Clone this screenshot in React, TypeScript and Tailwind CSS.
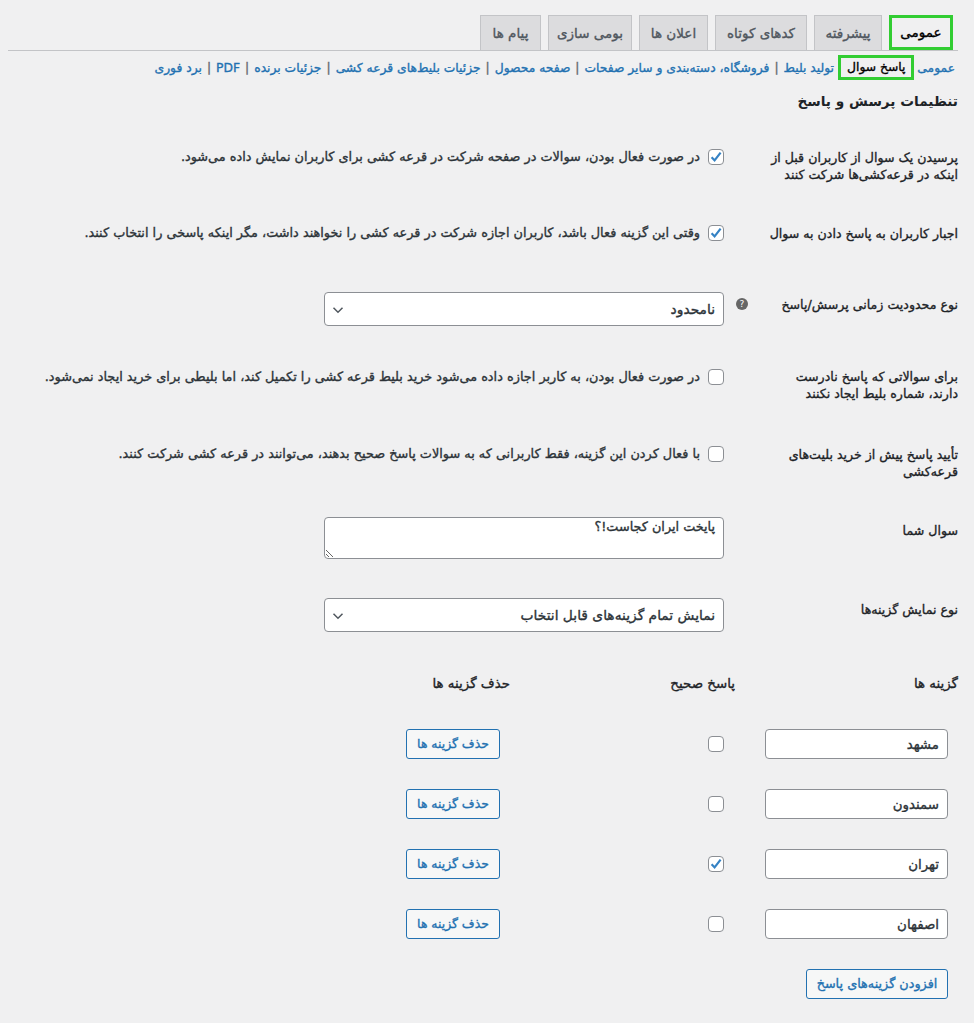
import React from "react";

const font = { fontFamily: '"DejaVu Sans", "Noto Sans", sans-serif' };
const med = "font-normal [-webkit-text-stroke:0.35px]";

function Check({ checked = false }: { checked?: boolean }) {
  return (
    <span className="relative block w-4 h-4 shrink-0">
      <input
        type="checkbox"
        defaultChecked={checked}
        className="appearance-none block w-4 h-4 bg-white border border-[#8c8f94] rounded-[4px]"
      />
      {checked && (
        <svg viewBox="0 0 16 16" className="absolute inset-0 w-4 h-4 pointer-events-none">
          <path d="M3.6 8.2 L6.6 11.4 L12.6 3.6" fill="none" stroke="#3582c4" strokeWidth="2.2" />
        </svg>
      )}
    </span>
  );
}

function Select({ value }: { value: string }) {
  return (
    <div className="relative w-[400px] h-[34px]">
      <select className={"appearance-none block w-full h-full bg-white border border-[#8c8f94] rounded-[4px] pr-2 pl-6 text-[13.8px] text-[#2c3338] " + med}>
        <option>{value}</option>
      </select>
      <svg viewBox="0 0 12 12" className="absolute left-2 top-[12px] w-3 h-3 pointer-events-none">
        <path d="M1.5 3.8 L6 8.2 L10.5 3.8" fill="none" stroke="#50575e" strokeWidth="1.5" />
      </svg>
    </div>
  );
}

function Row({ label, className, children }: { label: React.ReactNode; className: string; children: React.ReactNode }) {
  return (
    <div className={"flex items-start " + className}>
      <div className={"w-[234px] shrink-0 pl-[42px] text-[12.6px] leading-[17px] text-[#1d2327] " + med}>{label}</div>
      {children}
    </div>
  );
}

function CheckText({ checked, text }: { checked?: boolean; text: string }) {
  return (
    <div className="flex items-start gap-[8px]">
      <Check checked={checked} />
      <span className={"text-[12.85px] leading-4 text-[#2c3338] whitespace-nowrap " + med}>{text}</span>
    </div>
  );
}

const tabs = ["عمومی", "پیشرفته", "کدهای کوتاه", "اعلان ها", "بومی سازی", "پیام ها"];
const tabWidths = ["w-[64px]", "w-[68px]", "w-[92px]", "w-[69px]", "w-[84px]", "w-[61px]"];
const links = [
  "عمومی",
  "پاسخ سوال",
  "تولید بلیط",
  "فروشگاه، دسته‌بندی و سایر صفحات",
  "صفحه محصول",
  "جزئیات بلیط‌های قرعه کشی",
  "جزئیات برنده",
  "PDF",
  "برد فوری",
];
const options: [string, boolean][] = [
  ["مشهد", false],
  ["سمندون", false],
  ["تهران", true],
  ["اصفهان", false],
];

export default function App() {
  return (
    <div dir="rtl" style={font} className="min-h-[1023px] bg-[#f0f0f1] pr-4 pl-2 text-[#3c434a] overflow-hidden">
      <div className="flex items-end gap-[7px] h-[51px] border-b border-[#c3c4c7] pt-[15px] pr-[5px]">
        {tabs.map((t, i) => (
          <div
            key={t}
            className={
              "h-[35px] shrink-0 flex items-center justify-center text-[13.5px] whitespace-nowrap " +
              med + " " +
              tabWidths[i] +
              (i === 0
                ? " border-[3px] border-[#32cd32] text-[#000] bg-[#f0f0f1]"
                : " border border-[#c3c4c7] border-b-0 bg-[#dcdcde] text-[#50575e]")
            }
          >
            {t}
          </div>
        ))}
      </div>

      <div className={"flex items-center h-[25px] mt-[4px] pr-[3px] text-[12.3px] text-[#2271b1] whitespace-nowrap " + med}>
        {links.map((l, i) => (
          <React.Fragment key={l}>
            {i === 1 ? (
              <span className="h-[25px] flex items-center border-[3px] border-[#32cd32] px-[6px] mr-[3px] text-black">{l}</span>
            ) : (
              <span className="pt-[1px]">{l}</span>
            )}
            {i > 1 && i < links.length - 1 && <span className="mx-[5px] font-normal text-[#646970]">|</span>}
            {i === 1 && <span className="ml-[4px]" />}
          </React.Fragment>
        ))}
      </div>

      <h2 className="mt-[10px] text-[13.7px] leading-[22px] font-bold text-[#1d2327]">تنظیمات پرسش و پاسخ</h2>

      <Row className="mt-[37px]" label="پرسیدن یک سوال از کاربران قبل از اینکه در قرعه‌کشی‌ها شرکت کنند">
        <CheckText checked text="در صورت فعال بودن، سوالات در صفحه شرکت در قرعه کشی برای کاربران نمایش داده می‌شود." />
      </Row>
      <Row className="mt-[42px]" label="اجبار کاربران به پاسخ دادن به سوال">
        <CheckText checked text="وقتی این گزینه فعال باشد، کاربران اجازه شرکت در قرعه کشی را نخواهند داشت، مگر اینکه پاسخی را انتخاب کنند." />
      </Row>
      <Row
        className="mt-[50px]"
        label={
          <div className="flex items-center justify-between h-[24px]">
            <span className="whitespace-nowrap">نوع محدودیت زمانی پرسش/پاسخ</span>
            <span className="flex items-center justify-center w-3 h-3 rounded-full bg-[#666] text-white text-[9px] leading-none ml-[-30px] [-webkit-text-stroke:0px]">?</span>
          </div>
        }
      >
        <Select value="نامحدود" />
      </Row>
      <Row className="mt-[43px]" label={<div className="-mt-[1px]">برای سوالاتی که پاسخ نادرست دارند، شماره بلیط ایجاد نکنند</div>}>
        <CheckText text="در صورت فعال بودن، به کاربر اجازه داده می‌شود خرید بلیط قرعه کشی را تکمیل کند، اما بلیطی برای خرید ایجاد نمی‌شود." />
      </Row>
      <Row className="mt-[44px]" label="تأیید پاسخ پیش از خرید بلیت‌های قرعه‌کشی">
        <CheckText text="با فعال کردن این گزینه، فقط کاربرانی که به سوالات پاسخ صحیح بدهند، می‌توانند در قرعه کشی شرکت کنند." />
      </Row>
      <Row className="mt-[37px]" label={<div className="pt-[5px]">سوال شما</div>}>
        <textarea
          defaultValue="پایخت ایران کجاست!؟"
          className={"block w-[400px] h-[42px] bg-white border border-[#8c8f94] rounded-[4px] px-2 text-[12.8px] leading-[17px] text-[#2c3338] " + med}
        />
      </Row>
      <Row className="mt-[39px]" label={<div className="pt-[3px]">نوع نمایش گزینه‌ها</div>}>
        <Select value="نمایش تمام گزینه‌های قابل انتخاب" />
      </Row>

      <div className={"grid grid-cols-[223px_225px_1fr] mt-[44px] text-[13.4px] leading-4 text-[#1d2327] " + med}>
        <div>گزینه ها</div>
        <div>پاسخ صحیح</div>
        <div>حذف گزینه ها</div>
      </div>

      <div className="flex flex-col gap-[30px] mt-[37px]">
        {options.map(([name, checked]) => (
          <div key={name} className="grid grid-cols-[223px_225px_1fr] items-center h-[30px]">
            <div className="pr-[10px]">
              <input
                defaultValue={name}
                className={"block w-[183px] h-[30px] bg-white border border-[#8c8f94] rounded-[4px] px-2 text-[13.4px] text-[#2c3338] " + med}
              />
            </div>
            <div className="pr-[11px]">
              <Check checked={checked} />
            </div>
            <div className="pr-[10px]">
              <button className={"block w-[94px] h-[30px] border border-[#2271b1] rounded-[3px] bg-[#f6f7f7] text-[#2271b1] text-[12.4px] whitespace-nowrap " + med}>
                حذف گزینه ها
              </button>
            </div>
          </div>
        ))}
      </div>

      <div className="pr-[10px] mt-[30px]">
        <button className={"block w-[142px] h-[30px] border border-[#2271b1] rounded-[3px] bg-[#f6f7f7] text-[#2271b1] text-[12.8px] whitespace-nowrap " + med}>
          افزودن گزینه‌های پاسخ
        </button>
      </div>
    </div>
  );
}
